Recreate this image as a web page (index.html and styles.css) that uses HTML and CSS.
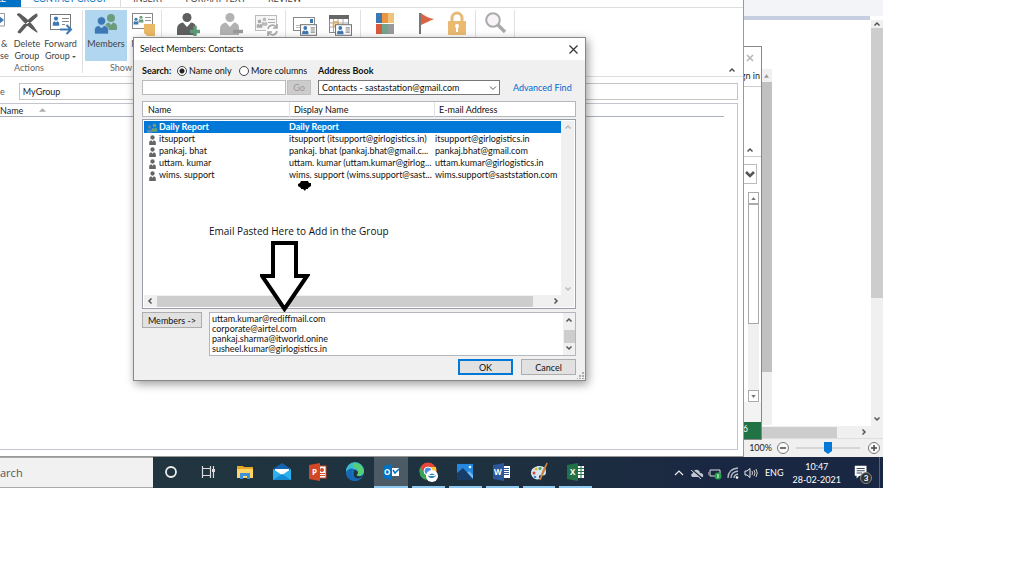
FILE: index.html
```
<!DOCTYPE html>
<html lang="en">
<head>
<meta charset="utf-8">
<title>Select Members: Contacts</title>
<link rel="stylesheet" href="styles.css">
</head>
<body>
<svg class="defs" aria-hidden="true">
  <symbol id="person" viewBox="0 0 10 12"><circle cx="5" cy="3" r="2.6"/><path d="M1 12V9Q1 6.400 3.400 6.200L5 8L6.600 6.200Q9 6.400 9 9V12Z"/></symbol>
  <symbol id="up" viewBox="0 0 8 8"><path d="M1.500 5.500L4 3L6.500 5.500" fill="none" stroke="currentColor" stroke-width="1.500"/></symbol>
  <symbol id="down" viewBox="0 0 8 8"><path d="M1.500 2.500L4 5L6.500 2.500" fill="none" stroke="currentColor" stroke-width="1.500"/></symbol>
  <symbol id="thindown" viewBox="0 0 8 8"><path d="M1 2.500L4 5.500L7 2.500" fill="none" stroke="currentColor"/></symbol>
  <symbol id="left" viewBox="0 0 8 8"><path d="M5.500 1.500L3 4L5.500 6.500" fill="none" stroke="currentColor" stroke-width="1.500"/></symbol>
  <symbol id="right" viewBox="0 0 8 8"><path d="M2.500 1.500L5 4L2.500 6.500" fill="none" stroke="currentColor" stroke-width="1.500"/></symbol>
  <symbol id="card" viewBox="0 0 16 11"><rect x=".5" y=".5" width="15" height="10" fill="#fff" stroke="#777"/><circle cx="5" cy="3.600" r="1.800" fill="#3d78b5"/><path d="M2 9.500V8Q2 6 4 6L5 7L6 6Q8 6 8 8V9.500Z" fill="#3d78b5"/><path d="M10 3.500H14M10 5.500H14M10 7.500H14" stroke="#888"/></symbol>
</svg>
<main class="desktop">
  <div class="workspace">

    <section class="back">
      <div class="back-top"></div>
      <div class="back-accent"></div>
      <div class="back-main">
        <div class="doc"><span class="colon">:</span></div>
        <div class="vbar">
          <svg class="chev"><use href="#up"/></svg>
          <div class="vthumb"></div>
          <svg class="chev"><use href="#down"/></svg>
        </div>
      </div>
      <div class="hbar"><div class="hthumb"></div><svg class="chev"><use href="#right"/></svg></div>
      <div class="status">
        <label for="zoom">100%</label>
        <button class="round" aria-label="Zoom out"><svg viewBox="0 0 12 12"><circle cx="6" cy="6" r="5.500" fill="#fafafa" stroke="#777"/><path d="M3 6H9" stroke="#444" stroke-width="1.500"/></svg></button>
        <input id="zoom" class="zoom" type="range" min="0" max="100" value="50">
        <button class="round" aria-label="Zoom in"><svg viewBox="0 0 12 12"><circle cx="6" cy="6" r="5.500" fill="#fafafa" stroke="#777"/><path d="M3 6H9M6 3V9" stroke="#444" stroke-width="1.500"/></svg></button>
      </div>
    </section>

    <div class="strip">
      <div class="strip-arrow"><svg viewBox="0 0 6 4"><path d="M0 4L3 0L6 4Z" fill="#999"/></svg></div>
      <div class="strip-thumb"></div>
    </div>

    <section class="sheet">
      <button class="sheet-close" aria-label="Close sheet"><svg viewBox="0 0 8 8"><path d="M1 1L7 7M7 1L1 7" stroke="#b5b5b5" stroke-width="1.500"/></svg></button>
      <a class="signin" href="#">gn in</a>
      <div class="sheet-ribbon"><svg class="chev"><use href="#up"/></svg></div>
      <button class="sheet-formula" aria-label="Expand"><svg viewBox="0 0 10 8"><path d="M1 2L5 6L9 2" fill="none" stroke="#555" stroke-width="2.500"/></svg></button>
      <div class="sheet-scroll">
        <button aria-label="Scroll up"><svg viewBox="0 0 6 4"><path d="M0 4L3 0L6 4Z" fill="#777"/></svg></button>
        <div class="sheet-thumb"></div>
        <button aria-label="Scroll down"><svg viewBox="0 0 6 4"><path d="M0 0L3 4L6 0Z" fill="#777"/></svg></button>
      </div>
      <div class="sheet-tabs"></div>
      <div class="sheet-status">6</div>
    </section>

    <section class="outlook">
      <nav class="tabs">
        <a class="tab file" href="#">FILE</a>
        <a class="tab active" href="#">CONTACT GROUP</a>
        <a class="tab" href="#">INSERT</a>
        <a class="tab format" href="#">FORMAT TEXT</a>
        <a class="tab" href="#">REVIEW</a>
      </nav>
      <div class="ribbon">
        <div class="group g-actions">
          <div class="tools">
            <button class="tool w10"><svg viewBox="0 0 10 26"><path d="M-2 3.500H4.500V16H-2" fill="#fff" stroke="#999"/><path d="M-2 5L4 10L-2 15Z" fill="#3d78b5"/></svg><span>&amp;<br>se</span></button>
            <button class="tool w34"><svg viewBox="0 0 24 26"><path d="M2.500 4.500Q4 3 6 5Q15 11 22 22Q12 16 4 6ZM21.500 4Q14 8 3 22L5 23Q12 14 22 6Z" fill="#5c5c5c" stroke="#5c5c5c" stroke-width="1.200" stroke-linejoin="round"/></svg><span>Delete<br>Group</span></button>
            <button class="tool w33"><svg viewBox="0 0 24 26"><rect x="1.500" y="4.500" width="20" height="15" fill="#fff" stroke="#777"/><use href="#person" x="3" y="6" width="8" height="10" fill="#3d78b5"/><path d="M13 8.500H20M13 11.500H20M13 14.500H16" stroke="#888"/><path d="M11 19.500H20" stroke="#fff" stroke-width="5"/><path d="M11 19.500H21M17.500 15L22 19.500L17.500 24" fill="none" stroke="#3d78b5" stroke-width="2"/></svg><span>Forward<br>Group <i class="caret"></i></span></button>
          </div>
          <div class="caption">Actions</div>
        </div>
        <div class="group g-show">
          <div class="tools">
            <button class="tool selected"><svg viewBox="0 0 24 26"><g fill="#6b9d7c"><circle cx="17" cy="8" r="4"/><path d="M11 20V17Q11 13 15 12.500L17 15L19 12.500Q23 13 23 17V20Z"/></g><g fill="#3d78b5" stroke="#b0d6f0" stroke-width=".7"><circle cx="7.500" cy="11" r="4.200"/><path d="M.5 24V20Q.5 16 5 15.500L7.500 18L10 15.500Q14.500 16 14.500 20V24Z"/></g></svg><span>Members</span></button>
            <button class="tool notes"><svg viewBox="0 0 24 26"><rect x="1.500" y="3.500" width="20" height="15" fill="#fff" stroke="#888"/><use href="#person" x="2" y="7" width="6" height="8" fill="#3d78b5"/><use href="#person" x="7" y="5" width="6" height="8" fill="#6b9d7c"/><path d="M14 7.500H20M14 10.500H20" stroke="#999"/><path d="M13 14H24V26H16L13 23Z" fill="#ebb967"/></svg><span>Notes</span></button>
          </div>
          <div class="caption">Show</div>
        </div>
        <div class="group g-members">
          <div class="tools">
            <button class="tool w48" aria-label="Add members"><svg viewBox="0 0 24 26"><g fill="#5f5f5f"><circle cx="11" cy="7.500" r="4.500"/><path d="M1 25V19Q1 13.500 7 12.500L11 17L15 12.500Q20 13 20 18V25Z"/></g><path d="M19 16V27M14 21.500H24" stroke="#5d9b78" stroke-width="3.500"/></svg></button>
            <button class="tool w38" aria-label="Remove member"><svg viewBox="0 0 24 26"><g fill="#b2b2b2"><circle cx="11" cy="7.500" r="4.500"/><path d="M1 25V19Q1 13.500 7 12.500L11 17L15 12.500Q20 13 20 18V25Z"/></g><path d="M14 21.500H24" stroke="#999" stroke-width="3.500"/></svg></button>
            <button class="tool w32" aria-label="Update now"><svg viewBox="0 0 24 26"><rect x="1.500" y="5.500" width="21" height="15" fill="#f6f6f6" stroke="#bbb"/><use href="#person" x="2" y="9" width="7" height="9" fill="#aaa"/><use href="#person" x="7" y="7" width="7" height="9" fill="#bbb"/><path d="M14 9.500H21M14 12.500H21" stroke="#aaa"/><circle cx="18.500" cy="20" r="6.500" fill="#fff"/><path d="M14 19A4.500 4.500 0 0 1 22 17M23 14V18H19M23 21A4.500 4.500 0 0 1 15 23M14 26V22H18" fill="none" stroke="#aaa" stroke-width="1.700"/></svg></button>
          </div>
        </div>
        <div class="group g-comm">
          <div class="tools">
            <button class="tool w38" aria-label="Email"><svg viewBox="0 0 24 26"><rect x=".5" y="7.500" width="21" height="13" fill="#fff" stroke="#888"/><rect x="17" y="9" width="3" height="4" fill="#3d78b5"/><path d="M3 15.500H8M3 17.500H7" stroke="#bbb"/><use href="#card" x="7" y="14" width="17" height="12"/></svg></button>
            <button class="tool w32" aria-label="Meeting"><svg viewBox="0 0 24 26"><rect x="1.500" y="5.500" width="19" height="17" fill="#fff" stroke="#888"/><path d="M1 7H21" stroke="#666" stroke-width="4"/><path d="M5.500 9V22M10 9V22M15 9V22M2 13H20M2 17H20" stroke="#aaa"/><path d="M5.500 12H10V16H5.500Z" fill="none" stroke="#e2a54f" stroke-width="1.500"/><use href="#card" x="7" y="14" width="17" height="12"/></svg></button>
          </div>
        </div>
        <div class="group g-tags">
          <div class="tools">
            <button class="tool w48" aria-label="Categorize"><svg viewBox="0 0 24 26"><path d="M3 3H9V13H3Z" fill="#3d78b5"/><path d="M9 3H15V13H9Z" fill="#eb9444"/><path d="M15 3H21V13H15Z" fill="#eec37c"/><path d="M3 14H9V24H3Z" fill="#d85b3d"/><path d="M9 14H15V24H9Z" fill="#6ea58b"/><path d="M15 14H21V24H15Z" fill="#999"/></svg></button>
            <button class="tool w34" aria-label="Follow up"><svg viewBox="0 0 24 26"><path d="M6 3V24" stroke="#777" stroke-width="2"/><path d="M7 3Q13 8 20 9L7 15Z" fill="#dc6244"/></svg></button>
            <button class="tool w28" aria-label="Private"><svg viewBox="0 0 24 26"><path d="M7 12V8A5 5 0 0 1 17 8V12" fill="none" stroke="#e5bb78" stroke-width="3"/><rect x="3" y="11" width="18" height="14" rx="1" fill="#e9ba70"/><circle cx="12" cy="16" r="2" fill="#fff"/><path d="M11 16H13V22H11Z" fill="#fff"/></svg></button>
          </div>
        </div>
        <div class="group g-zoom">
          <div class="tools">
            <button class="tool w38" aria-label="Zoom"><svg viewBox="0 0 24 26"><circle cx="10" cy="10" r="6.800" fill="#f7f3f7" stroke="#aaa" stroke-width="2"/><path d="M15 15L22 22" stroke="#aaa" stroke-width="3.500"/></svg></button>
          </div>
        </div>
        <button class="collapse" aria-label="Collapse ribbon"><svg class="chev"><use href="#up"/></svg></button>
      </div>
      <div class="namerow"><label for="gname">e</label><input id="gname" type="text" value="MyGroup"></div>
      <div class="pane"><div class="panehead">Name <svg viewBox="0 0 8 4"><path d="M0 4L4 0L8 4Z" fill="#aaa"/></svg></div></div>
    </section>

    <section class="dialog" role="dialog" aria-label="Select Members: Contacts">
      <header class="title"><span>Select Members: Contacts</span><button aria-label="Close"><svg viewBox="0 0 9 9"><path d="M.5 .5L8.500 8.500M8.500 .5L.5 8.500" stroke="#333" stroke-width="1.200"/></svg></button></header>
      <div class="dbody">
        <div class="labels">
          <label class="strong lsearch" for="q">Search:</label>
          <label class="radio rname"><input type="radio" name="mode" checked>Name only</label>
          <label class="radio rmore"><input type="radio" name="mode">More columns</label>
          <label class="strong" for="book">Address Book</label>
        </div>
        <div class="searchrow">
          <input id="q" type="text"><button class="go" disabled>Go</button>
          <span class="selectwrap"><select id="book"><option>Contacts - sastastation@gmail.com</option></select><svg class="chev"><use href="#thindown"/></svg></span>
          <a href="#">Advanced Find</a>
        </div>
        <div class="colhead"><span>Name</span><span>Display Name</span><span>E-mail Address</span></div>
        <div class="list">
          <div class="listmain">
            <div class="rows">
            <table>
              <tr class="sel"><td><svg viewBox="0 0 12 10"><use href="#person" x="0" y="2" width="7" height="8" fill="#5287b8"/><use href="#person" x="5" y="0" width="7" height="9" fill="#6b9d7c"/></svg>Daily Report</td><td>Daily Report</td><td></td></tr>
              <tr><td><svg viewBox="0 0 12 10"><use href="#person" x="2" y="0" width="9" height="10" fill="#666"/></svg>itsupport</td><td>itsupport (itsupport@girlogistics.in)</td><td>itsupport@girlogistics.in</td></tr>
              <tr><td><svg viewBox="0 0 12 10"><use href="#person" x="2" y="0" width="9" height="10" fill="#666"/></svg>pankaj. bhat</td><td>pankaj. bhat (pankaj.bhat@gmail.c...</td><td>pankaj.bhat@gmail.com</td></tr>
              <tr><td><svg viewBox="0 0 12 10"><use href="#person" x="2" y="0" width="9" height="10" fill="#666"/></svg>uttam. kumar</td><td>uttam. kumar (uttam.kumar@girlog...</td><td>uttam.kumar@girlogistics.in</td></tr>
              <tr><td><svg viewBox="0 0 12 10"><use href="#person" x="2" y="0" width="9" height="10" fill="#666"/></svg>wims. support</td><td>wims. support (wims.support@sast...</td><td>wims.support@saststation.com</td></tr>
            </table>
            </div>
            <div class="lv"><svg class="chev pale"><use href="#up"/></svg><svg class="chev pale"><use href="#down"/></svg></div>
          </div>
          <div class="lh"><svg class="chev"><use href="#left"/></svg><div class="lhthumb"></div><svg class="chev"><use href="#right"/></svg></div>
        </div>
        <div class="memberrow">
          <button class="btn">Members -&gt;</button>
          <div class="memberbox">
            <textarea aria-label="Members" spellcheck="false">uttam.kumar@rediffmail.com
corporate@airtel.com
pankaj.sharma@itworld.onine
susheel.kumar@girlogistics.in</textarea>
            <div class="mv"><svg class="chev"><use href="#up"/></svg><div class="mthumb"></div><svg class="chev"><use href="#down"/></svg></div>
          </div>
        </div>
        <div class="actions"><button class="btn ok">OK</button><button class="btn">Cancel</button></div>
      </div>
      <svg class="grip" viewBox="0 0 7 7"><path d="M5 0H7V2H5ZM5 3H7V5H5ZM2 3H4V5H2ZM5 6H7V7H5ZM2 6H4V7H2ZM0 6H1V7H0Z" fill="#aaa"/></svg>
      <svg class="blot" viewBox="0 0 13 11"><path d="M3 1H10L11 3H13V6L10 8V9H8L7 11L5 9H3V8L0 6V4L2 3Z"/></svg>
      <p class="note">Email Pasted Here to Add in the Group</p>
      <svg class="arrow" viewBox="0 0 50 72"><path d="M13 3H36V36H47L24.500 69L2 36H13Z" fill="#fff" stroke="#000" stroke-width="4"/></svg>
    </section>
  </div>

  <footer class="taskbar">
    <div class="search">arch</div>
    <div class="apps">
      <button aria-label="Cortana"><svg viewBox="0 0 20 20"><circle cx="10" cy="10" r="5" fill="none" stroke="#eee" stroke-width="1.800"/></svg></button>
      <button aria-label="Task view"><svg viewBox="0 0 20 20"><path d="M4.500 4V6.500H12.500V4M4.500 16V13.500H12.500V16M4.500 7V13M12.500 7V13M15.500 4V16" fill="none" stroke="#ddd" stroke-width="1.200"/><path d="M14 7H17V10H14Z" fill="#ddd"/></svg></button>
      <button aria-label="File Explorer"><svg viewBox="0 0 20 20"><path d="M2 4H8L9 5H18V16H2Z" fill="#e6a825"/><path d="M2 7H18V16H2Z" fill="#ffd567"/><path d="M5 17V11H15V17H12V14H8V17Z" fill="#3f91d7"/></svg></button>
      <button aria-label="Mail"><svg viewBox="0 0 20 20"><path d="M1 7L10 1L19 7V17H1Z" fill="#1264b0"/><path d="M3 7H17V13H3Z" fill="#fff"/><path d="M1 7L10 13L19 7V18H1Z" fill="#2bb1ed"/><path d="M1 18L10 12L19 18Z" fill="#168bd5"/></svg></button>
      <button aria-label="PowerPoint"><svg viewBox="0 0 20 20"><rect x="10" y="4" width="8" height="12" fill="#fff" stroke="#d24726"/><path d="M12 11.500H17M12 13.500H17" stroke="#d24726"/><circle cx="14" cy="8" r="2" fill="#d24726"/><path d="M1 3L12 1V19L1 17Z" fill="#d24726"/><text x="4" y="13" class="gl">P</text></svg></button>
      <button aria-label="Edge"><svg viewBox="0 0 20 20"><circle cx="10" cy="10" r="9" fill="#1479c8"/><path d="M1 9A9 9 0 0 1 19 9Q19 14 13 14Q11 13 13 11Q12 7 8 7Q3 7 1 11Z" fill="#39bed0"/><path d="M8 1.300A9 9 0 0 1 19 9Q18 14 13 14Q11 13 13 11Q13 6 8 5Z" fill="#57cf77"/><path d="M1 10Q4 5 9 7Q5 10 8 14Q11 18 17 15.500Q14 19 9 19Q1 18 1 10Z" fill="#1768b5"/><path d="M9 8Q13 8 13 11Q11 13 12.500 14Q15 15 18 13Q16 17 12 16.500Q7 15 9 8Z" fill="#223642"/></svg></button>
      <button class="current" aria-label="Outlook"><svg viewBox="0 0 20 20"><path d="M11 6H18V14H11Z" fill="#fff"/><path d="M12 8L14 11L18 7" fill="none" stroke="#0072c6" stroke-width="1.500"/><path d="M2 4L11 2V18L2 16Z" fill="#0072c6"/><text x="3" y="13" class="gl">O</text></svg></button>
      <button class="open" aria-label="Chrome"><svg viewBox="0 0 20 20"><circle cx="9" cy="9" r="8.500" fill="#e5473a"/><path d="M1 6L8 18Q.5 17 .5 9Z" fill="#38a457"/><path d="M9 5H17Q19 12 12 17L8 17.500L12 10Z" fill="#f7ca36"/><path d="M1.500 5L9 17.500L5 17Q-1 12 1.500 5Z" fill="#38a457"/><circle cx="9" cy="9" r="4" fill="#4b8cf0" stroke="#fff"/><circle cx="13" cy="14" r="6" fill="#fff"/><path d="M9 14Q13 9 17 14L14 16H11Z" fill="#2886b9"/><path d="M10 13.500H16" stroke="#fff"/></svg></button>
      <button class="open" aria-label="Photos"><svg viewBox="0 0 20 20"><path d="M2 2H18V18H2Z" fill="#2588df"/><path d="M11 12L14 9L18 13V18H14Z" fill="#6db8f1"/><path d="M2 11L8 6L18 17V18H2Z" fill="#173d69"/><circle cx="15" cy="5" r="1.300" fill="#fff"/></svg></button>
      <button class="open" aria-label="Word"><svg viewBox="0 0 20 20"><rect x="11" y="4" width="7" height="12" fill="#fff"/><path d="M12 6.500H17M12 8.500H17M12 10.500H17M12 12.500H17" stroke="#2b579a"/><path d="M1 3L12 1V19L1 17Z" fill="#2b579a"/><text x="2" y="13" class="gl">W</text></svg></button>
      <button class="open" aria-label="Paint"><svg viewBox="0 0 20 20"><path d="M2 12Q1 6 9 4Q17 3 17 10Q17 15 11 13Q9 14 11 17Q4 19 2 12Z" fill="#d5e7f2"/><circle cx="5" cy="11" r="1.500" fill="#d34836"/><circle cx="7" cy="7" r="1.500" fill="#e7b42d"/><circle cx="11" cy="6.500" r="1.500" fill="#4ba15c"/><circle cx="6" cy="15" r="1.300" fill="#4285d4"/><path d="M18 1L15 9L11 18L14 9Z" fill="#c9833c" stroke="#c9833c" stroke-width="1.500"/></svg></button>
      <button class="open" aria-label="Excel"><svg viewBox="0 0 20 20"><rect x="11" y="4" width="7" height="12" fill="#fff"/><path d="M12 6.500H18M12 9.500H18M12 12.500H18M15 4V16" stroke="#217346"/><path d="M1 3L12 1V19L1 17Z" fill="#217346"/><text x="4" y="13" class="gl">X</text></svg></button>
    </div>
    <div class="tray">
      <svg viewBox="0 0 14 14"><path d="M3 9L7 5L11 9" fill="none" stroke="#eee" stroke-width="1.200"/></svg>
      <svg viewBox="0 0 14 14"><path d="M2 11Q0 8 3 7Q4 3 8 4Q10 5 10 7Q14 7 13 11Z" fill="#c2c7cf"/><path d="M1 3L12 12" stroke="#1b2941" stroke-width="1.500"/><path d="M1 4L11 13" stroke="#ccd" stroke-width="1"/></svg>
      <svg viewBox="0 0 14 14"><path d="M2 4H12V10H2Z" fill="none" stroke="#ddd"/><path d="M0 6V9" stroke="#ddd"/><circle cx="10" cy="10" r="3.500" fill="#26a34a"/><path d="M10 8V12" stroke="#fff"/></svg>
      <svg viewBox="0 0 14 14"><path d="M2 12Q2 3 12 2M5 12Q5 6 12 5M8 12Q8 9 12 8" fill="none" stroke="#b6bdc9" stroke-width="1.300"/><circle cx="11" cy="11.500" r="1.300" fill="#fff"/></svg>
      <svg viewBox="0 0 14 14"><path d="M1 5H3L6 2.500V11.500L3 9H1Z" fill="none" stroke="#eee"/><path d="M8 5Q9 7 8 9M10 4Q12 7 10 10M12 3Q14.500 7 12 11" fill="none" stroke="#ccc"/></svg>
      <span class="lang">ENG</span>
      <time>10:47<br>28-02-2021</time>
      <button class="bell" aria-label="Notifications"><svg viewBox="0 0 20 20"><path d="M2 2H15V13H7L4 16V13H2Z" fill="#fff"/><path d="M4 5H13M4 7.500H13M4 10H10" stroke="#25334c"/></svg><b>3</b></button>
      <i class="peek"></i>
    </div>
  </footer>
</main>
</body>
</html>
```
FILE: styles.css
```
* { box-sizing: border-box; }
body { margin: 0; background: #fff; color: #222; font: 9px/12px Lato, "Noto Sans", sans-serif; }
button, input, select, textarea { font: inherit; color: inherit; margin: 0; padding: 0; border: 0; background: none; border-radius: 0; outline: 0; }
a { color: inherit; text-decoration: none; }
svg { display: block; flex: none; }
.defs { position: absolute; width: 0; height: 0; }
.chev { width: 8px; height: 8px; color: #555; }
.pale { color: #bbb; }

.desktop { margin-right: 141px; height: 488px; display: flex; flex-direction: column; overflow: hidden; }
.workspace { position: relative; flex: 1; overflow: hidden; }

/* Document window at the back */
.back { position: absolute; inset: 0; display: flex; flex-direction: column; background: #fff; }
.back-top { height: 16px; background: #f3f4f7; }
.back-accent { height: 4px; margin-right: 13px; background: #c5cfe1; }
.back-main { flex: 1; display: flex; justify-content: flex-end; }
.doc { flex: 1; display: flex; justify-content: flex-end; padding: 16px 123px 0 0; }
.colon { width: 14px; font-size: 12px; line-height: 14px; font-weight: 700; }
.vbar { width: 12px; background: #f0f0f0; display: flex; flex-direction: column; align-items: center; justify-content: space-between; padding-bottom: 3px; }
.vthumb { width: 12px; height: 270px; background: #cdcdcd; margin-bottom: auto; }
.hbar { height: 12px; background: #f0f0f0; display: flex; align-items: center; padding-right: 15px; }
.hthumb { flex: 1; height: 11px; background: #cdcdcd; margin-right: 23px; }
.status { height: 19px; border-top: 1px solid #ddd; background: #f0f0f0; display: flex; align-items: center; justify-content: flex-end; gap: 7px; padding-right: 3px; }
.status label { margin-right: -2px; }
.round, .round svg { width: 12px; height: 12px; }
.zoom { appearance: none; width: 64px; height: 12px; margin-right: 1px; background: linear-gradient(#d6d6d6, #d6d6d6) center / 100% 2px no-repeat; }
.zoom::-webkit-slider-thumb { appearance: none; width: 8px; height: 12px; background: #0078d7; clip-path: polygon(0 0, 100% 0, 100% 75%, 50% 100%, 0 75%); }

.strip { position: absolute; right: 111px; top: 69px; bottom: 32px; width: 12px; background: #f0f0f0; }
.strip-arrow { height: 13px; display: flex; align-items: center; justify-content: center; }
.strip-arrow svg { width: 5px; height: 4px; }
.strip-thumb { height: 290px; background: #c1c1c1; }

/* Spreadsheet window */
.sheet { position: absolute; right: 121px; top: 46px; bottom: 17px; width: 60px; background: #fff; border: 1px solid #888; display: flex; flex-direction: column; align-items: flex-end; }
.sheet-close { padding: 7px 7px 8px; }
.sheet-close svg { width: 8px; height: 8px; }
.signin { padding-right: 1px; }
.sheet-ribbon { align-self: stretch; height: 71px; margin-top: 4px; border: solid #ccc; border-width: 1px 0; display: flex; align-items: flex-end; justify-content: flex-end; padding: 0 7px 2px; }
.sheet-formula { width: 20px; height: 20px; margin: 7px 4px 8px; border: 1px solid #bbb; display: grid; place-items: center end; padding-right: 1px; }
.sheet-formula svg { width: 10px; height: 8px; }
.sheet-scroll { flex: 1; width: 11px; margin-right: 2px; background: #f0f0f0; display: flex; flex-direction: column; }
.sheet-scroll button { height: 12px; border: 1px solid #aaa; background: #fff; display: grid; place-items: center; }
.sheet-scroll svg { width: 5px; height: 3px; }
.sheet-thumb { height: 120px; margin-bottom: auto; background: #fff; border: 1px solid #aaa; }
.sheet-tabs { align-self: stretch; height: 20px; background: #f3f3f3; }
.sheet-status { align-self: stretch; height: 17px; background: #217346; color: #fff; text-align: right; padding: 1px 13px; }

/* Contact group window */
.outlook { position: absolute; inset: 0 139px 0 0; overflow: hidden; background: #fff; border: solid #999; border-width: 0 1px 1px 0; display: flex; flex-direction: column; }
.tabs { height: 8px; flex: none; display: flex; align-items: flex-end; border-bottom: 1px solid #ddd; overflow: hidden; }
.tab { height: 20px; padding: 6px 12px 0; line-height: 12px; white-space: nowrap; color: #444; }
.tab.file { width: 21px; padding: 6px 15px 0 0; background: #0072c6; color: #fff; direction: rtl; overflow: hidden; }
.tab.active { color: #0072c6; border-right: 1px solid #ddd; }
.tab.format { padding: 6px 10px 0; }
.ribbon { height: 69px; flex: none; display: flex; border-bottom: 1px solid #ddd; }
.group { display: flex; flex-direction: column; justify-content: space-between; border-right: 1px solid #e1e1e1; margin: 2px 0 3px; }
.g-actions { width: 83px; }
.g-show { width: 79px; padding-left: 2px; }
.g-members { width: 124px; padding-left: 2px; }
.g-comm { width: 75px; }
.g-tags { width: 115px; }
.g-zoom { width: 39px; }
.tools { display: flex; }
.tool { display: flex; flex-direction: column; align-items: center; line-height: 12px; color: #444; white-space: nowrap; }
.tool svg { width: 24px; height: 26px; overflow: hidden; }
.tool span { margin-top: 2px; }
.w10 { width: 10px; align-items: flex-start; }
.w10 svg { width: 10px; }
.w28 { width: 28px; }
.w32 { width: 32px; }
.w33 { width: 33px; }
.w34 { width: 34px; }
.w38 { width: 38px; }
.w48 { width: 48px; }
.caret { display: inline-block; border: 2px solid transparent; border-top-color: #555; border-bottom: 0; vertical-align: middle; }
.selected { width: 42px; height: 51px; background: #b0d6f0; }
.notes { width: 32px; }
.caption { text-align: center; padding-right: 24px; color: #666; line-height: 10px; }
.g-show .caption { padding-right: 4px; }
.collapse { margin: auto 7px 2px auto; }
.namerow { display: flex; align-items: center; gap: 14px; margin: 6px 5px 3px 0; color: #555; }
.namerow input { flex: 1; height: 17px; border: 1px solid #c5c5c5; padding-left: 3px; color: #222; }
.pane { flex: 1; margin: 0 5px 6px 0; border: solid #c3c6cf; border-width: 1px 1px 1px 0; }
.panehead { margin-right: 13px; height: 13px; line-height: 13px; border-bottom: 1px solid #aab0bd; display: flex; align-items: center; gap: 16px; }
.panehead svg { width: 7px; height: 4px; }

/* Dialog */
.dialog { position: absolute; left: 133px; top: 37px; width: 453px; background: #f0f0f0; border: 1px solid #888; box-shadow: 2px 3px 9px rgba(0, 0, 0, .4); color: #111; }
.title { height: 22px; padding: 0 7px 0 6px; background: #fff; display: flex; align-items: center; justify-content: space-between; }
.title svg { width: 9px; height: 9px; }
.dbody { padding: 4px 9px 5px 8px; }
.labels { display: flex; align-items: center; height: 13px; white-space: nowrap; }
.strong { font-weight: 700; }
.lsearch { width: 35px; }
.radio { display: flex; align-items: center; gap: 2px; }
.rname { width: 62px; }
.rmore { width: 79px; }
.radio input { appearance: none; width: 10px; height: 10px; border: 1px solid #444; border-radius: 50%; background: #fff; }
.radio input:checked { background: radial-gradient(circle, #222 0 2px, #fff 3px); }
.searchrow { display: flex; height: 15px; margin-top: 3px; white-space: nowrap; }
.searchrow > input { width: 144px; border: 1px solid #bbb; background: #fff; }
.go { width: 24px; margin: 0 7px 0 1px; background: #ccc; color: #999; border: 1px solid #bfbfbf; line-height: 12px; }
.selectwrap { position: relative; width: 182px; margin-right: 13px; }
.selectwrap select { appearance: none; width: 100%; height: 15px; background: #fff; border: 1px solid #777; padding-left: 3px; line-height: 12px; }
.selectwrap .chev { position: absolute; right: 3px; top: 4px; pointer-events: none; }
.searchrow a { color: #0066cc; line-height: 15px; }
.colhead { display: grid; grid-template-columns: 146px 145px 1fr; height: 16px; margin-top: 6px; background: #fff; border: 1px solid #b3b7bd; line-height: 15px; }
.colhead span { padding-left: 4px; border-left: 1px solid #e3e3e3; }
.colhead span:first-child { border: 0; padding-left: 5px; }
.list { margin-top: 2px; border: 1px solid #999ea8; background: #fff; padding: 1px; height: 190px; display: flex; flex-direction: column; }
.listmain { flex: 1; display: flex; }
.rows { flex: 1; }
.rows table { width: 100%; table-layout: fixed; border-collapse: collapse; white-space: nowrap; }
.rows td { padding: 0; height: 12px; line-height: 12px; }
.rows td:nth-child(1) { width: 145px; }
.rows td:nth-child(2) { width: 146px; }
.rows td svg { width: 12px; height: 10px; display: inline-block; vertical-align: middle; margin: 0 1px 0 2px; }
.sel { background: #0078d7; color: #fff; font-weight: 700; }
.lv { width: 13px; background: #f0f0f0; display: flex; flex-direction: column; align-items: center; justify-content: space-between; padding: 2px 0; }
.lh { height: 12px; background: #f0f0f0; display: flex; align-items: center; padding: 0 14px 0 2px; }
.lhthumb { flex: 1; height: 11px; background: #cdcdcd; margin: 0 19px 0 3px; }
.memberrow { display: flex; align-items: flex-start; gap: 7px; margin-top: 3px; }
.btn { height: 16px; width: 60px; background: #e1e1e1; border: 1px solid #adadad; line-height: 13px; white-space: nowrap; }
.memberbox { flex: 1; display: flex; height: 44px; background: #fff; border: 1px solid #b3b7bd; }
.memberbox textarea { flex: 1; resize: none; overflow: hidden; line-height: 10px; padding: 1px 2px 0; white-space: pre; }
.mv { width: 12px; background: #f0f0f0; display: flex; flex-direction: column; align-items: center; justify-content: space-between; padding: 3px 0; }
.mthumb { width: 11px; height: 13px; margin-top: 4px; background: #cdcdcd; }
.actions { display: flex; justify-content: flex-end; gap: 8px; margin-top: 3px; }
.actions .btn { width: 55px; }
.actions .ok { border: 2px solid #0078d7; line-height: 11px; }
.grip { position: absolute; right: 1px; bottom: 1px; width: 7px; height: 7px; }
.blot { position: absolute; left: 164px; top: 142px; width: 13px; height: 11px; }
.note { position: absolute; left: 75px; top: 186px; margin: 0; font-family: "Open Sans", "Noto Sans", sans-serif; font-size: 10px; line-height: 14px; white-space: nowrap; }
.arrow { position: absolute; left: 126px; top: 202px; width: 50px; height: 72px; }

/* Taskbar */
.taskbar { height: 31px; flex: none; display: flex; background: linear-gradient(90deg, #20353f 20%, #1e303f 60%, #1a2742 80%); color: #fff; }
.search { width: 153px; background: #f1f1f1; border: solid #aaa; border-width: 1px 0; color: #555; font: 11px/29px "Open Sans", sans-serif; }
.apps { width: 441px; display: grid; grid-template-columns: repeat(12, 1fr); }
.apps button { display: grid; place-items: center; border-bottom: 2px solid transparent; }
.apps svg { width: 20px; height: 20px; }
.apps .open { border-image: linear-gradient(90deg, transparent 10%, #8cc8f0 10% 90%, transparent 90%) 2; }
.apps .current { background: #4b5a65; border-bottom-color: #8cc8f0; margin-right: 2px; }
.gl { fill: #fff; font: bold 8px "Open Sans", sans-serif; }
.tray { margin-left: auto; display: flex; align-items: center; gap: 4px; padding-right: 3px; font-size: 9px; }
.tray > svg { width: 14px; height: 14px; }
.lang { margin: 0 5px 0 3px; }
.tray time { text-align: center; line-height: 13px; }
.bell { position: relative; margin: 0 4px 0 8px; }
.bell svg { width: 18px; height: 18px; }
.bell b { position: absolute; left: 7px; top: 8px; width: 12px; height: 12px; border-radius: 50%; background: #333; border: 1px solid #888; color: #fff; font-size: 8px; line-height: 10px; }
.peek { width: 1px; height: 31px; background: #56617a; }
```
